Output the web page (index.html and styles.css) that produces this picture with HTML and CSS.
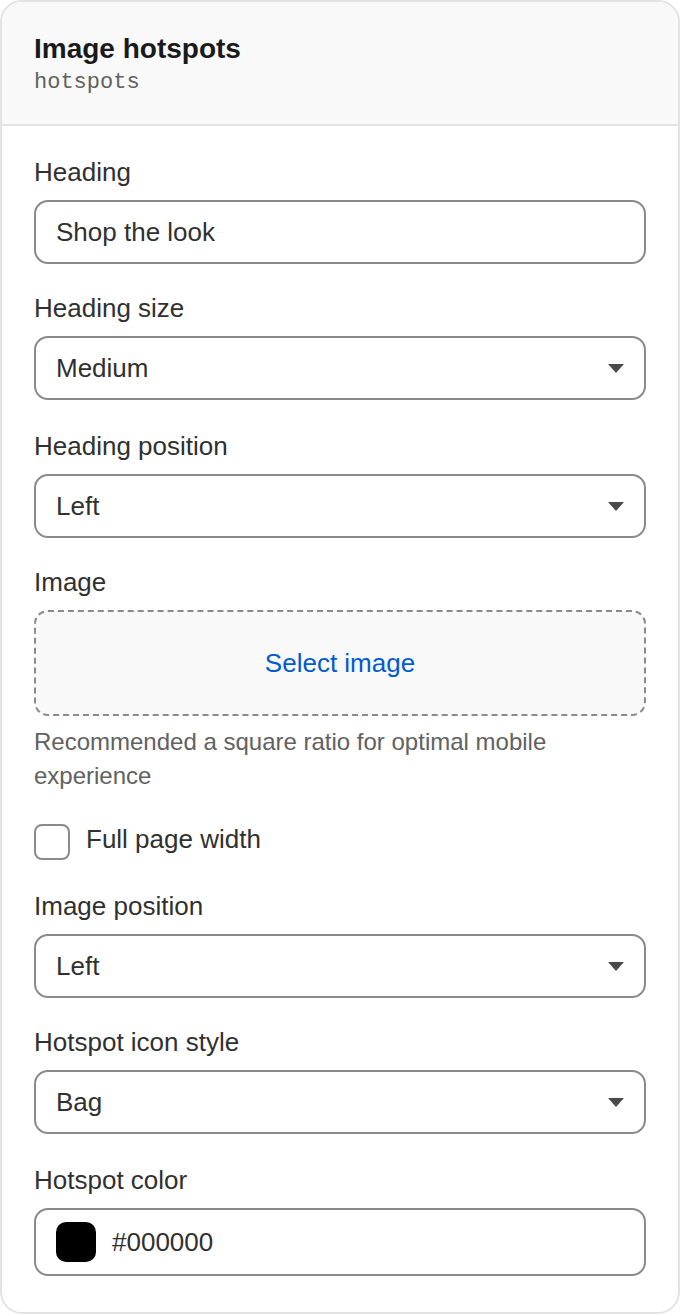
FILE: index.html
```html
<!DOCTYPE html>
<html lang="en">
<head>
<meta charset="utf-8">
<title>Image hotspots</title>
<link rel="stylesheet" href="styles.css">
</head>
<body>
<div class="card">
  <div class="card-header">
    <div class="title">Image hotspots</div>
    <div class="subtitle">hotspots</div>
  </div>
  <div class="card-body">
    <div class="field">
      <div class="label">Heading</div>
      <div class="input">Shop the look</div>
    </div>
    <div class="field">
      <div class="label">Heading size</div>
      <div class="input select"><span>Medium</span><span class="caret"></span></div>
    </div>
    <div class="field field-shift">
      <div class="label">Heading position</div>
      <div class="input select"><span>Left</span><span class="caret"></span></div>
    </div>
    <div class="field">
      <div class="label">Image</div>
      <div class="dropzone"><span class="link">Select image</span></div>
      <div class="help">Recommended a square ratio for optimal mobile experience</div>
    </div>
    <div class="check-row">
      <span class="checkbox"></span>
      <span class="check-label">Full page width</span>
    </div>
    <div class="field">
      <div class="label">Image position</div>
      <div class="input select"><span>Left</span><span class="caret"></span></div>
    </div>
    <div class="field">
      <div class="label">Hotspot icon style</div>
      <div class="input select"><span>Bag</span><span class="caret"></span></div>
    </div>
    <div class="field field-color">
      <div class="label">Hotspot color</div>
      <div class="input color-input"><span class="swatch"></span><span>#000000</span></div>
    </div>
  </div>
</div>
</body>
</html>
```
FILE: styles.css
```css
* { box-sizing: border-box; }
html, body { margin: 0; padding: 0; background: #ffffff; }
body {
  font-family: "Liberation Sans", Arial, sans-serif;
  color: #303030;
}
.card {
  width: 680px;
  height: 1314px;
  border: 2px solid #e3e3e3;
  border-radius: 22px;
  overflow: hidden;
  background: #ffffff;
}
.card-header {
  background: #f9f9f9;
  border-bottom: 2px solid #e3e3e3;
  padding: 29px 32px 27px;
}
.title {
  font-size: 28px;
  line-height: 36px;
  font-weight: 700;
  color: #1a1a1a;
}
.subtitle {
  margin-top: 2px;
  font-family: "Liberation Mono", "Courier New", monospace;
  font-size: 22px;
  line-height: 28px;
  color: #616161;
}
.card-body {
  padding: 26px 32px 0;
  display: flex;
  flex-direction: column;
  gap: 24px;
}
.field-shift { margin-top: 2px; }
.label {
  font-size: 26px;
  line-height: 40px;
  margin-bottom: 8px;
  color: #303030;
}
.input {
  height: 64px;
  border: 2px solid #8a8a8a;
  border-radius: 14px;
  padding: 0 20px;
  display: flex;
  align-items: center;
  font-size: 26px;
  color: #303030;
  background: #ffffff;
}
.select {
  justify-content: space-between;
  padding-right: 20px;
}
.caret {
  width: 0;
  height: 0;
  border-left: 8px solid transparent;
  border-right: 8px solid transparent;
  border-top: 9px solid #4a4a4a;
}
.dropzone {
  height: 106px;
  border: 2px dashed #8a8a8a;
  border-radius: 14px;
  background: #f9f9f9;
  display: flex;
  align-items: center;
  justify-content: center;
}
.link {
  font-size: 26px;
  color: #005bd3;
}
.help {
  margin-top: 9px;
  font-size: 24px;
  line-height: 34px;
  color: #616161;
}
.check-row {
  display: flex;
  align-items: flex-start;
  gap: 16px;
  padding: 7px 0 2px;
}
.checkbox {
  width: 36px;
  height: 36px;
  border: 2px solid #8a8a8a;
  border-radius: 8px;
  background: #ffffff;
  flex: none;
}
.check-label {
  font-size: 26px;
  line-height: 30px;
  color: #303030;
}
.field-color { margin-top: 2px; }
.color-input {
  height: 68px;
  padding: 0 20px;
  gap: 16px;
}
.swatch {
  width: 40px;
  height: 40px;
  border-radius: 10px;
  background: #000000;
  flex: none;
}
```
